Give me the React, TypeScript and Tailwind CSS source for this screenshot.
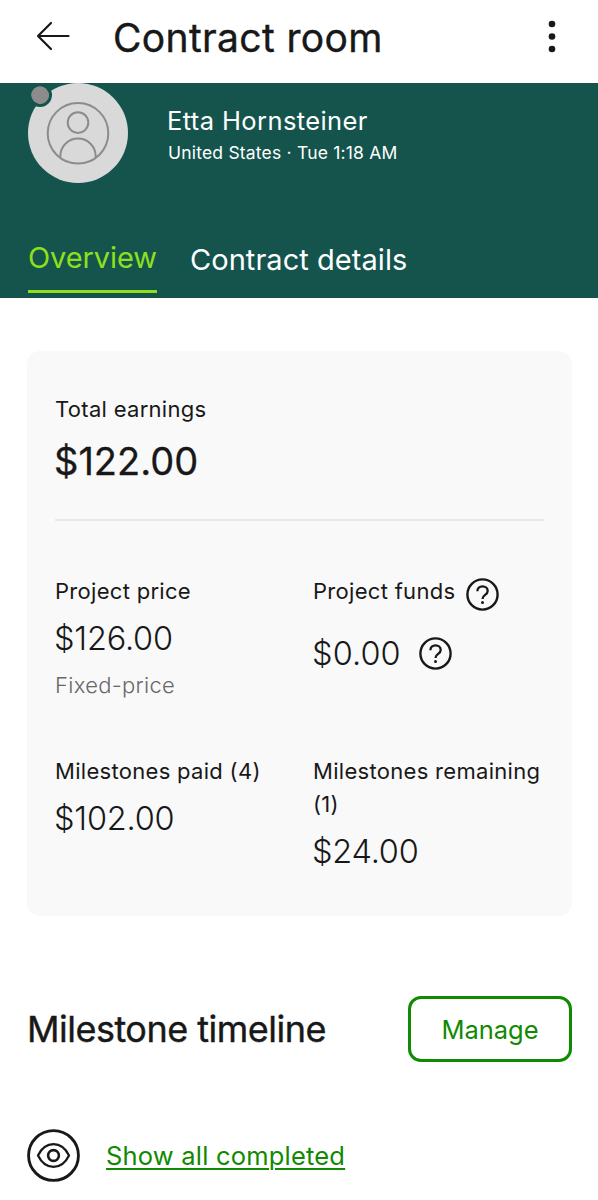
import type { ReactNode } from "react";

const HelpIcon = () => (
  <svg className="size-[33px] shrink-0" viewBox="0 0 33 33" fill="none" stroke="#181818">
    <circle cx="16.5" cy="16.5" r="15.1" strokeWidth={2.4} />
    <path
      d="M11.4 13.2c0-2.9 2.2-4.9 5.1-4.9s5.2 1.9 5.2 4.6c0 4.1-5.2 3.8-5.2 8"
      strokeWidth={2.3}
    />
    <circle cx="16.5" cy="24.4" r="1.5" fill="#181818" stroke="none" />
  </svg>
);

const EyeIcon = () => (
  <svg className="size-[53px] shrink-0" viewBox="0 0 54 54" fill="none" stroke="#181818">
    <circle cx="27" cy="27" r="25.4" strokeWidth={2.9} />
    <path
      d="M11.2 27C15 19.2 20.6 15.4 27 15.4S39 19.2 42.8 27C39 34.8 33.4 38.6 27 38.6S15 34.8 11.2 27Z"
      strokeWidth={2.3}
      strokeLinejoin="round"
    />
    <circle cx="27" cy="27" r="5.5" strokeWidth={2.6} />
  </svg>
);

const Avatar = () => (
  <div className="relative size-[100px] shrink-0 rounded-full bg-[#d9d9d9]">
    <svg className="size-full" viewBox="0 0 100 100" fill="none" stroke="#8c8c8c" strokeWidth={2}>
      <circle cx="50" cy="50.3" r="30.3" />
      <circle cx="50" cy="39.6" r="10.3" />
      <path d="M32.3 74.8V73.3a17.7 17.7 0 0 1 35.4 0v1.5" />
    </svg>
    {/* Offline status */}
    <span className="absolute top-0 left-0 size-[24px] rounded-full border-[3.5px] border-[#14544d] bg-[#8c8c8c] bg-clip-padding" />
  </div>
);

interface StatProps {
  label: string;
  amount: string;
  children?: ReactNode;
}

function Stat({ label, amount, children }: StatProps) {
  return (
    <div>
      <p className="text-[22px] leading-[33px] tracking-[0.3px]">{label}</p>
      <p className="mt-2 -ml-px text-[32.5px] leading-[45px] font-light tracking-[-0.2px]">
        {amount}
      </p>
      {children}
    </div>
  );
}

export default function App() {
  return (
    <div className="h-[1200px] w-[598px] overflow-hidden bg-white font-['Inter','Liberation_Sans',sans-serif] text-[#181818]">
      <header className="flex h-[83px] items-start pr-[36px] pl-[36px]">
        <button aria-label="Back" className="mt-[21px]">
          <svg
            className="h-[30px] w-[34px]"
            viewBox="0 0 34 30"
            fill="none"
            stroke="currentColor"
            strokeWidth={2.2}
            strokeLinecap="round"
            strokeLinejoin="round"
          >
            <path d="M15 2L2 15l13 13M2 15h30.5" />
          </svg>
        </button>
        <h1 className="ml-[43px] text-[39px] leading-[76px] tracking-[0.35px] [-webkit-text-stroke:0.4px_currentColor]">
          Contract room
        </h1>
        <button aria-label="More" className="mt-[20px] ml-auto">
          <svg className="h-[33px] w-[20px]" viewBox="0 0 20 33" fill="currentColor">
            <circle cx="10" cy="4" r="3.3" />
            <circle cx="10" cy="16.5" r="3.3" />
            <circle cx="10" cy="29" r="3.3" />
          </svg>
        </button>
      </header>

      <section className="flex h-[215px] flex-col justify-between bg-[#14544d] px-7 text-white">
        <div className="flex gap-10">
          <Avatar />
          <div className="pt-[22px]">
            <h2 className="-ml-px text-[25.5px] leading-8 tracking-[0.4px]">Etta Hornsteiner</h2>
            <p className="mt-1 text-[17.5px] leading-6 tracking-[0.2px]">
              United States · Tue 1:18 AM
            </p>
          </div>
        </div>
        <nav className="flex gap-[33px] pb-[5px] text-[29px] leading-[42px]">
          <button className="h-[56px] w-[129px] border-b-[3px] border-[#8ee01b] pb-[11px] text-left tracking-[-0.1px] whitespace-nowrap text-[#8ee01b]">
            Overview
          </button>
          <button className="h-[56px] pb-[11px] tracking-[0.05px] whitespace-nowrap">
            Contract details
          </button>
        </nav>
      </section>

      <main className="pt-[53px] pr-[26px] pl-[27px]">
        <section className="h-[565px] rounded-[13px] bg-[#f9f9f9] px-7 pt-[42px]">
          <p className="text-[22px] leading-[33px] tracking-[0.3px]">Total earnings</p>
          <p className="mt-[13px] -ml-px text-[38px] leading-[44px] [-webkit-text-stroke:0.3px_currentColor]">
            $122.00
          </p>
          <hr className="mt-9 border-t-2 border-[#e9e9e9]" />
          <div className="mt-[54px] grid grid-cols-[258px_1fr] gap-y-[53px]">
            <Stat label="Project price" amount="$126.00">
              <p className="mt-2 text-[22px] leading-[33px] font-light tracking-[0.3px] text-[#676767]">
                Fixed-price
              </p>
            </Stat>
            <div>
              <div className="flex h-[33px] gap-[11px]">
                <span className="text-[22px] leading-[33px] tracking-[0.3px]">Project funds</span>
                <span className="mt-[3px]">
                  <HelpIcon />
                </span>
              </div>
              <div className="mt-[23px] flex items-center gap-[18px]">
                <span className="-ml-px text-[32.5px] leading-[45px] font-light tracking-[0.1px]">
                  $0.00
                </span>
                <HelpIcon />
              </div>
            </div>
            <Stat label="Milestones paid (4)" amount="$102.00" />
            <Stat label="Milestones remaining (1)" amount="$24.00" />
          </div>
        </section>

        <div className="mt-20 flex items-center justify-between">
          <h2 className="text-[36px] leading-[44px] tracking-[-0.5px] [-webkit-text-stroke:0.4px_currentColor]">
            Milestone timeline
          </h2>
          <button className="h-[66px] w-[164px] rounded-[13px] border-3 border-[#108a00] pt-[2px] text-[25.5px] text-[#108a00]">
            Manage
          </button>
        </div>

        <div className="mt-[67px] flex items-center gap-[26px]">
          <EyeIcon />
          <a className="text-[25.5px] leading-8 tracking-[0.2px] text-[#108a00] underline decoration-2 underline-offset-[3px]">
            Show all completed
          </a>
        </div>
      </main>
    </div>
  );
}
